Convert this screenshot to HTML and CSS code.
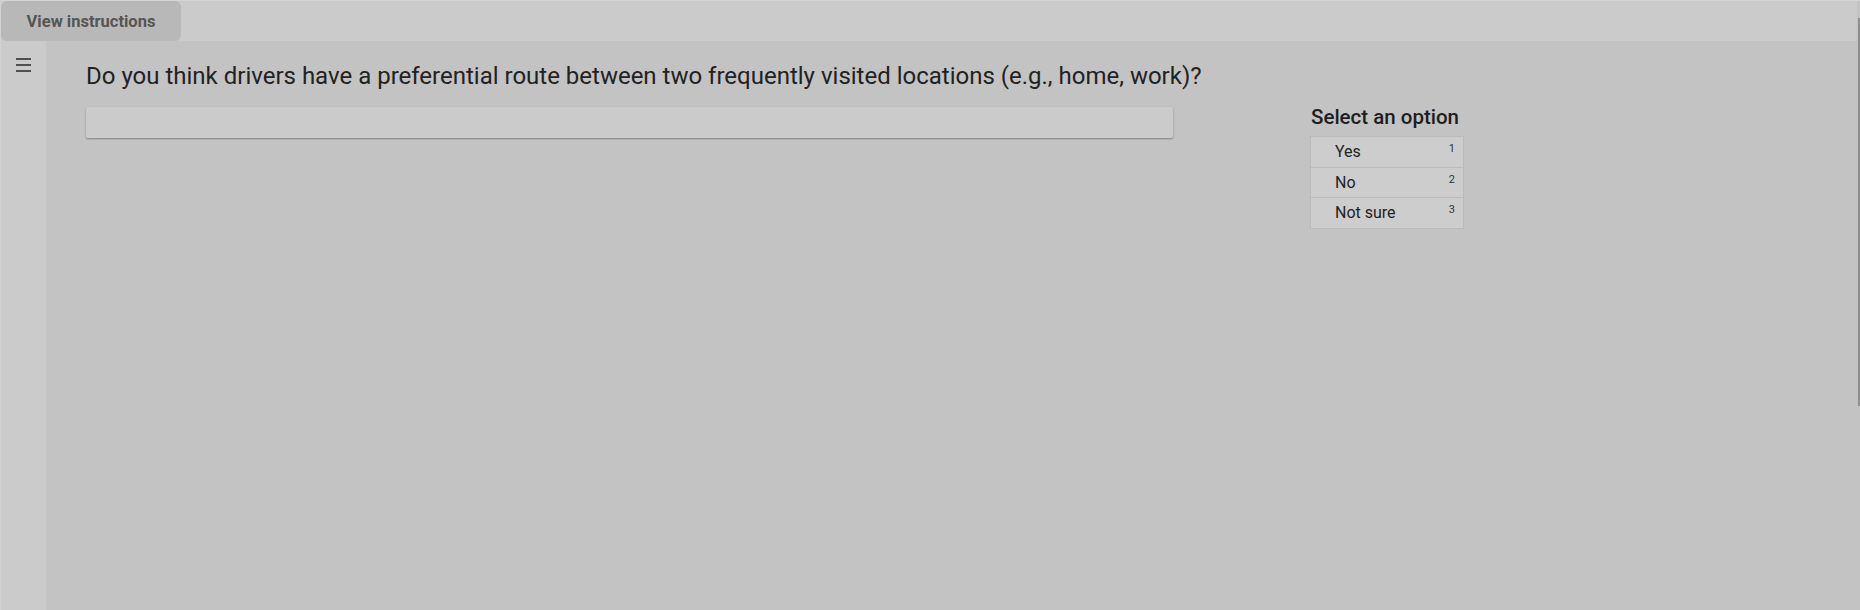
FILE: index.html
```html
<!DOCTYPE html>
<html lang="en">
<head>
<meta charset="utf-8">
<title>Question</title>
<link rel="stylesheet" href="styles.css">
</head>
<body>
<div class="app">
  <header class="topbar">
    <button class="instructions-btn" type="button">View instructions</button>
  </header>
  <div class="body-row">
    <aside class="sidebar">
      <svg class="menu-icon" width="15" height="14" viewBox="0 0 15 14" aria-hidden="true">
        <rect x="0" y="0" width="15" height="2" fill="#4f4f4f"/>
        <rect x="0" y="6" width="15" height="2" fill="#4f4f4f"/>
        <rect x="0" y="12" width="15" height="2" fill="#4f4f4f"/>
      </svg>
    </aside>
    <main class="main">
      <h1 class="question">Do you think drivers have a preferential route between two frequently visited locations (e.g., home, work)?</h1>
      <div class="answer-row">
        <div class="text-box"></div>
        <section class="options">
          <h2 class="options-title">Select an option</h2>
          <ul class="option-list">
            <li class="option"><span class="option-label">Yes</span><span class="option-key">1</span></li>
            <li class="option"><span class="option-label">No</span><span class="option-key">2</span></li>
            <li class="option"><span class="option-label">Not sure</span><span class="option-key">3</span></li>
          </ul>
        </section>
      </div>
    </main>
  </div>
  <div class="scroll-thumb"></div>
</div>
</body>
</html>
```
FILE: styles.css
```css
html, body {
  margin: 0;
  padding: 0;
  height: 100%;
}

body {
  background: #c3c3c3;
  font-family: Roboto, "Liberation Sans", Arial, sans-serif;
  color: #222;
  overflow: hidden;
}

.app {
  position: relative;
  height: 609px;
  border-top: 1px solid #d6d6d6;
  border-left: 1px solid #d2d2d2;
  display: flex;
  flex-direction: column;
}

.topbar {
  height: 40px;
  margin-right: 3px;
  background: #cbcbcb;
  display: flex;
  align-items: stretch;
  flex: none;
}

.instructions-btn {
  width: 180px;
  border: none;
  border-radius: 6px;
  background: #b8b8b8;
  color: #555;
  font-family: Roboto, "Liberation Sans", Arial, sans-serif;
  font-size: 16.5px;
  font-weight: 700;
  padding: 0;
  cursor: pointer;
}

.body-row {
  flex: 1;
  display: flex;
}

.sidebar {
  width: 45px;
  flex: none;
  background: #cbcbcb;
  display: flex;
  justify-content: center;
  align-items: flex-start;
  padding-top: 17px;
  padding-right: 1px;
  box-sizing: border-box;
}

.menu-icon {
  display: block;
}

.main {
  flex: 1;
  padding: 20px 0 0 40px;
}

.question {
  margin: 0;
  font-size: 24px;
  font-weight: 400;
  line-height: 30px;
  color: #222;
}

.answer-row {
  display: flex;
  align-items: flex-start;
  margin-top: 16px;
  gap: 137px;
}

.text-box {
  width: 1087px;
  height: 31px;
  background: #cbcbcb;
  border-radius: 2px;
  box-shadow: 0 1px 2px rgba(0, 0, 0, 0.35);
}

.options {
  width: 154px;
}

.options-title {
  margin: 0 0 9px 1px;
  font-size: 20.5px;
  font-weight: 500;
  line-height: 20px;
  color: #1e1e1e;
  white-space: nowrap;
}

.option-list {
  list-style: none;
  margin: 0;
  padding: 0;
  border: 1px solid #bababa;
  background: #cdcdcd;
}

.option {
  display: flex;
  justify-content: space-between;
  align-items: flex-start;
  height: 29.7px;
  border-top: 1px solid #bababa;
  padding: 0 8px 0 24px;
}

.option:first-child {
  border-top: none;
}

.option-label {
  font-size: 16px;
  line-height: 29px;
  color: #222;
}

.option-key {
  font-size: 11px;
  line-height: 11px;
  margin-top: 6px;
  color: #333;
}

.scroll-thumb {
  position: absolute;
  right: 0;
  top: 17px;
  width: 2px;
  height: 388px;
  background: #8e8e8e;
}
```
